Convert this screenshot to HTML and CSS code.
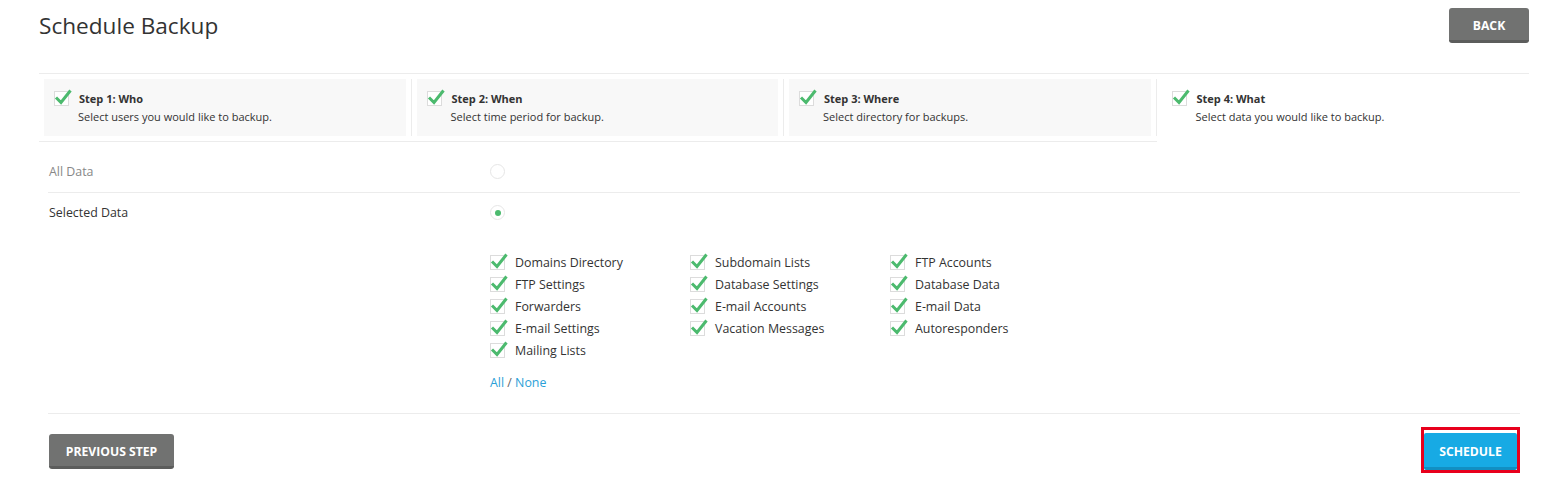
FILE: index.html
```html
<!DOCTYPE html>
<html>
<head>
<meta charset="utf-8">
<link rel="stylesheet" href="styles.css">
</head>
<body>
<div class="page">
  <div class="header">
    <h1 class="title">Schedule Backup</h1>
    <button class="btn btn-grey btn-back">BACK</button>
  </div>

  <div class="steps">
    <div class="step done">
      <div class="step-cell">
        <div class="step-box">
          <span class="cb"><svg viewBox="0 0 20 18" class="tick"><path d="M2 6.5 L7 11.5 L16.5 -0.5"/></svg></span>
          <div class="step-text">
            <div class="step-title">Step 1: Who</div>
            <div class="step-desc">Select users you would like to backup.</div>
          </div>
        </div>
      </div>
    </div>
    <div class="step done">
      <div class="step-cell">
        <div class="step-box">
          <span class="cb"><svg viewBox="0 0 20 18" class="tick"><path d="M2 6.5 L7 11.5 L16.5 -0.5"/></svg></span>
          <div class="step-text">
            <div class="step-title">Step 2: When</div>
            <div class="step-desc">Select time period for backup.</div>
          </div>
        </div>
      </div>
    </div>
    <div class="step done">
      <div class="step-cell">
        <div class="step-box">
          <span class="cb"><svg viewBox="0 0 20 18" class="tick"><path d="M2 6.5 L7 11.5 L16.5 -0.5"/></svg></span>
          <div class="step-text">
            <div class="step-title">Step 3: Where</div>
            <div class="step-desc">Select directory for backups.</div>
          </div>
        </div>
      </div>
    </div>
    <div class="step active">
      <div class="step-cell">
        <div class="step-box">
          <span class="cb"><svg viewBox="0 0 20 18" class="tick"><path d="M2 6.5 L7 11.5 L16.5 -0.5"/></svg></span>
          <div class="step-text">
            <div class="step-title">Step 4: What</div>
            <div class="step-desc">Select data you would like to backup.</div>
          </div>
        </div>
      </div>
    </div>
  </div>

  <div class="form">
    <div class="row row-line">
      <div class="label muted">All Data</div>
      <div class="field"><span class="radio"></span></div>
    </div>
    <div class="row row-sel">
      <div class="label">Selected Data</div>
      <div class="field"><span class="radio checked"></span></div>
    </div>
    <div class="row row-options">
      <div class="label"></div>
      <div class="field">
        <div class="options">
          <div class="opt"><span class="cb"><svg viewBox="0 0 20 18" class="tick"><path d="M2 6.5 L7 11.5 L16.5 -0.5"/></svg></span>Domains Directory</div>
          <div class="opt"><span class="cb"><svg viewBox="0 0 20 18" class="tick"><path d="M2 6.5 L7 11.5 L16.5 -0.5"/></svg></span>Subdomain Lists</div>
          <div class="opt"><span class="cb"><svg viewBox="0 0 20 18" class="tick"><path d="M2 6.5 L7 11.5 L16.5 -0.5"/></svg></span>FTP Accounts</div>
          <div class="opt"><span class="cb"><svg viewBox="0 0 20 18" class="tick"><path d="M2 6.5 L7 11.5 L16.5 -0.5"/></svg></span>FTP Settings</div>
          <div class="opt"><span class="cb"><svg viewBox="0 0 20 18" class="tick"><path d="M2 6.5 L7 11.5 L16.5 -0.5"/></svg></span>Database Settings</div>
          <div class="opt"><span class="cb"><svg viewBox="0 0 20 18" class="tick"><path d="M2 6.5 L7 11.5 L16.5 -0.5"/></svg></span>Database Data</div>
          <div class="opt"><span class="cb"><svg viewBox="0 0 20 18" class="tick"><path d="M2 6.5 L7 11.5 L16.5 -0.5"/></svg></span>Forwarders</div>
          <div class="opt"><span class="cb"><svg viewBox="0 0 20 18" class="tick"><path d="M2 6.5 L7 11.5 L16.5 -0.5"/></svg></span>E-mail Accounts</div>
          <div class="opt"><span class="cb"><svg viewBox="0 0 20 18" class="tick"><path d="M2 6.5 L7 11.5 L16.5 -0.5"/></svg></span>E-mail Data</div>
          <div class="opt"><span class="cb"><svg viewBox="0 0 20 18" class="tick"><path d="M2 6.5 L7 11.5 L16.5 -0.5"/></svg></span>E-mail Settings</div>
          <div class="opt"><span class="cb"><svg viewBox="0 0 20 18" class="tick"><path d="M2 6.5 L7 11.5 L16.5 -0.5"/></svg></span>Vacation Messages</div>
          <div class="opt"><span class="cb"><svg viewBox="0 0 20 18" class="tick"><path d="M2 6.5 L7 11.5 L16.5 -0.5"/></svg></span>Autoresponders</div>
          <div class="opt"><span class="cb"><svg viewBox="0 0 20 18" class="tick"><path d="M2 6.5 L7 11.5 L16.5 -0.5"/></svg></span>Mailing Lists</div>
        </div>
        <div class="select-links"><a class="link">All</a> / <a class="link">None</a></div>
      </div>
    </div>
  </div>

  <div class="footer">
    <button class="btn btn-grey btn-prev">PREVIOUS STEP</button>
    <span class="focus-ring"><button class="btn btn-blue">SCHEDULE</button></span>
  </div>
</div>
</body>
</html>
```

FILE: styles.css
```css
* { box-sizing: border-box; }
html, body { margin: 0; padding: 0; background: #fff; }
body { font-family: "Open Sans", "Liberation Sans", sans-serif; color: #333; }

.page { padding: 0 36px 0 39px; }

.header {
  display: flex;
  justify-content: space-between;
  align-items: flex-start;
  height: 74px;
  border-bottom: 1px solid #ececec;
}
.title {
  margin: 10px 0 0 0;
  font-size: 22.6px;
  font-weight: 400;
  line-height: 32px;
  color: #333;
}

.btn {
  font-family: "Open Sans", "Liberation Sans", sans-serif;
  font-weight: 700;
  font-size: 12.2px;
  color: #fff;
  border: 0;
  border-radius: 3px;
  cursor: pointer;
  padding: 0;
}
.btn-grey {
  background: #717271;
  border-bottom: 3px solid #5c5d5c;
}
.btn-back { width: 80px; height: 35px; margin-top: 8px; padding-top: 2px; }

.steps { display: flex; }
.step {
  flex: 1;
  padding: 5px 0;
  border-bottom: 1px solid #ececec;
}
.step.active { border-bottom-color: transparent; }
.step-cell {
  padding: 0 5px;
  border-right: 1px solid #ececec;
}
.step.active .step-cell { border-right: 0; }
.step-box {
  height: 57px;
  background: #f8f8f8;
  display: flex;
  align-items: flex-start;
  padding: 12px 0 0 10px;
}
.step.active .step-box { background: #fff; }
.step-text { margin-left: 10px; margin-top: -1px; }
.step-title { font-size: 11px; font-weight: 700; color: #333; line-height: 18px; }
.step-desc { font-size: 11px; color: #333; line-height: 18px; margin-left: -1px; }

.cb {
  position: relative;
  display: inline-block;
  width: 15px;
  height: 15px;
  border: 1px solid #dcdcdc;
  background: #fff;
  flex: none;
}
.tick {
  position: absolute;
  left: -1px;
  top: -1px;
  width: 20px;
  height: 18px;
  overflow: visible;
}
.tick path {
  fill: none;
  stroke: #4cba6e;
  stroke-width: 3;
  stroke-linecap: butt;
  stroke-linejoin: miter;
}

.form { padding: 0 9px 0 9px; }
.row { display: flex; align-items: center; }
.row-line { border-bottom: 1px solid #ececec; height: 51px; padding-top: 8px; }
.row-sel { height: 39px; }
.label { width: 442px; flex: none; font-size: 12.4px; color: #333; padding-left: 1px; }
.label.muted { color: #888; }
.radio {
  display: block;
  width: 15px;
  height: 15px;
  border: 1px solid #e6e6e6;
  border-radius: 50%;
  position: relative;
}
.radio.checked::after {
  content: "";
  position: absolute;
  left: 3.5px;
  top: 3.5px;
  width: 6px;
  height: 6px;
  border-radius: 50%;
  background: #4cba6e;
}

.row-options { align-items: flex-start; padding-top: 23px; padding-bottom: 22px; border-bottom: 1px solid #ececec; }
.options {
  display: grid;
  grid-template-columns: 200px 200px 200px;
  row-gap: 7px;
}
.opt {
  display: flex;
  align-items: center;
  font-size: 12.4px;
  color: #333;
  height: 15px;
}
.opt .cb { margin-right: 10px; }
.select-links { margin-top: 16px; font-size: 12.4px; color: #666; line-height: 17px; }
.link { color: #2a9fd8; cursor: pointer; }

.footer {
  display: flex;
  justify-content: space-between;
  align-items: flex-start;
  padding: 13px 9px 0 10px;
}
.btn-prev { width: 125px; height: 35px; padding-top: 2px; margin-top: 7px; }
.focus-ring {
  display: block;
  border: 3px solid #e8001c;
  padding: 3px 0 0 0;
}
.btn-blue {
  display: block;
  background: #17aae4;
  border-bottom: 3px solid #118fc2;
  width: 93px;
  height: 37px;
  border-radius: 2px;
  padding-top: 2px;
}
```
